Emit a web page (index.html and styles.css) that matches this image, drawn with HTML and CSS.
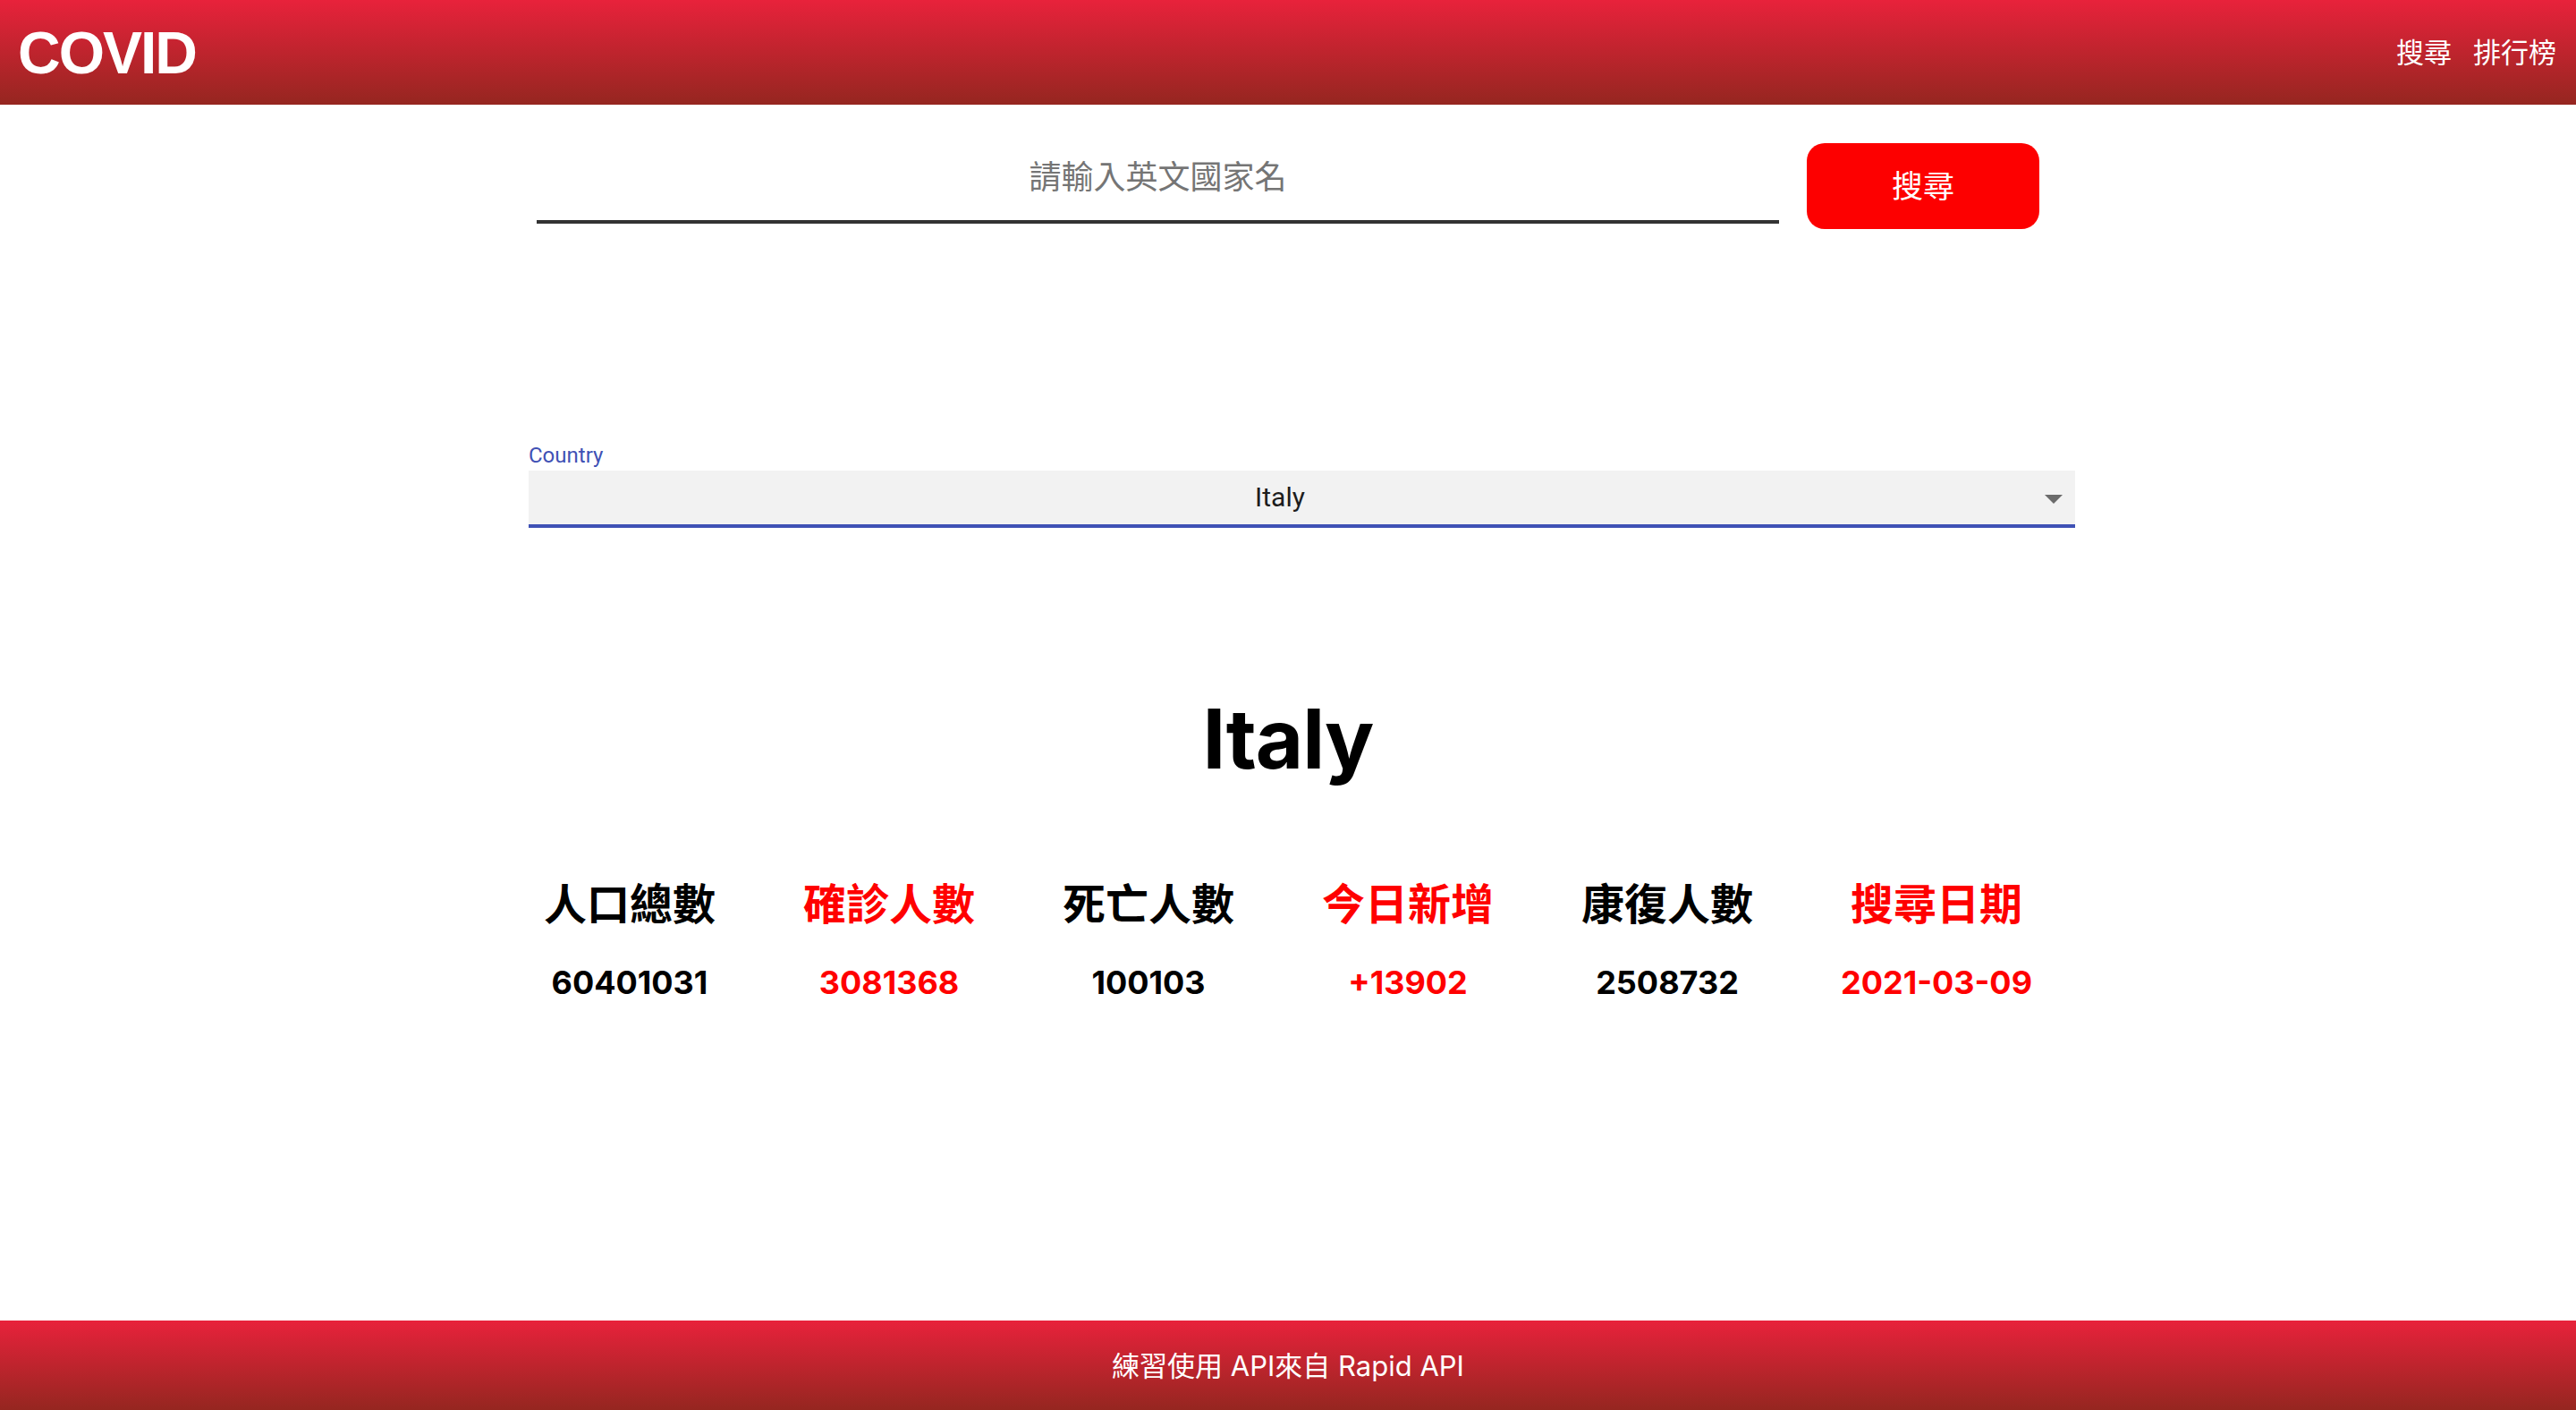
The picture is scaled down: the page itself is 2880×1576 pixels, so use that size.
FILE: index.html
```html
<!DOCTYPE html>
<html lang="zh-Hant">
<head>
<meta charset="utf-8">
<title>COVID</title>
<link rel="stylesheet" href="styles.css">
</head>
<body>
<header class="topbar">
  <div class="brand">COVID</div>
  <nav class="nav">
    <a class="nav-link" href="#">搜尋</a>
    <a class="nav-link" href="#">排行榜</a>
  </nav>
</header>
<main class="main">
  <form class="search">
    <input class="search-input" type="text" placeholder="請輸入英文國家名">
    <button class="search-btn" type="button">搜尋</button>
  </form>
  <div class="field">
    <label class="field-label">Country</label>
    <div class="select">
      <span class="select-value">Italy</span>
      <span class="select-arrow"></span>
    </div>
  </div>
  <h1 class="country">Italy</h1>
  <section class="stats">
    <div class="stat">
      <div class="stat-label">人口總數</div>
      <div class="stat-value">60401031</div>
    </div>
    <div class="stat red">
      <div class="stat-label">確診人數</div>
      <div class="stat-value">3081368</div>
    </div>
    <div class="stat">
      <div class="stat-label">死亡人數</div>
      <div class="stat-value">100103</div>
    </div>
    <div class="stat red">
      <div class="stat-label">今日新增</div>
      <div class="stat-value">+13902</div>
    </div>
    <div class="stat">
      <div class="stat-label">康復人數</div>
      <div class="stat-value">2508732</div>
    </div>
    <div class="stat red">
      <div class="stat-label">搜尋日期</div>
      <div class="stat-value">2021-03-09</div>
    </div>
  </section>
</main>
<footer class="footer">練習使用 API來自 Rapid API</footer>
</body>
</html>
```

FILE: styles.css
```css
* { box-sizing: border-box; }
html, body { margin: 0; padding: 0; }
body {
  min-height: 1576px;
  display: flex;
  flex-direction: column;
  background: #fff;
  font-family: Inter, "Noto Sans CJK TC", sans-serif;
  color: #000;
}
.topbar {
  height: 117px;
  display: flex;
  align-items: center;
  justify-content: space-between;
  padding: 0 22px 0 20px;
  background: linear-gradient(to bottom, #e8223b, #952620);
}
.brand {
  font-family: "Liberation Sans", Arial, sans-serif;
  font-weight: 700;
  font-size: 66px;
  letter-spacing: -2px;
  color: #fff;
  line-height: 1;
}
.nav { display: flex; gap: 24px; padding-bottom: 5px; }
.nav-link {
  color: #fff;
  text-decoration: none;
  font-family: "Noto Sans CJK TC", sans-serif;
  font-size: 31px;
  line-height: 1;
}
.main { flex: 1; display: flex; flex-direction: column; align-items: center; }
.search {
  width: 1680px;
  margin-top: 43px;
  display: flex;
  align-items: flex-start;
  gap: 31px;
}
.search-input {
  flex: 1;
  height: 90px;
  border: none;
  border-bottom: 4px solid #333;
  padding: 0 0 17px;
  margin: 0;
  outline: none;
  text-align: center;
  font-family: "Noto Sans CJK TC", sans-serif;
  font-size: 36px;
  background: transparent;
}
.search-input::placeholder { color: #757575; }
.search-btn {
  width: 260px;
  height: 96px;
  border: none;
  border-radius: 20px;
  background: #fd0000;
  color: #fff;
  font-family: "Noto Sans CJK TC", sans-serif;
  font-size: 35px;
  padding: 0 0 6px;
  margin: 0;
}
.field {
  align-self: flex-start;
  margin-left: 591px;
  margin-top: 239px;
  width: 1729px;
}
.field-label {
  display: block;
  font-family: Roboto, "Liberation Sans", sans-serif;
  font-size: 24px;
  line-height: 28px;
  color: #3f51b5;
  margin-bottom: 3px;
}
.select {
  position: relative;
  height: 64px;
  background: #f2f2f2;
  border-bottom: 4px solid #3f51b5;
  padding: 0 73px 0 24px;
  text-align: center;
  font-family: Roboto, "Liberation Sans", sans-serif;
  font-size: 30px;
  line-height: 60px;
  color: #1d1d1d;
}
.select-arrow {
  position: absolute;
  right: 14px;
  top: 27px;
  width: 0;
  height: 0;
  border-left: 10px solid transparent;
  border-right: 10px solid transparent;
  border-top: 10px solid #6b6b6b;
}
.country {
  margin: 181px 0 0;
  font-family: Inter, sans-serif;
  font-weight: 700;
  font-size: 92px;
  line-height: 110px;
  letter-spacing: -1px;
}
.stats {
  margin-top: 97px;
  display: flex;
  gap: 98px;
}
.stat { display: flex; flex-direction: column; align-items: center; }
.stat.red { color: #ff0000; }
.stat-label {
  font-family: "Noto Sans CJK TC", sans-serif;
  font-weight: 700;
  font-size: 48px;
  line-height: 58px;
}
.stat-value {
  margin-top: 41px;
  font-family: Inter, sans-serif;
  font-weight: 700;
  font-size: 36px;
  line-height: 43px;
}
.footer {
  height: 100px;
  display: flex;
  align-items: center;
  justify-content: center;
  padding-bottom: 3px;
  background: linear-gradient(to bottom, #e8223b, #952620);
  color: #fff;
  font-family: Inter, "Noto Sans CJK TC", sans-serif;
  font-size: 31px;
}
```
